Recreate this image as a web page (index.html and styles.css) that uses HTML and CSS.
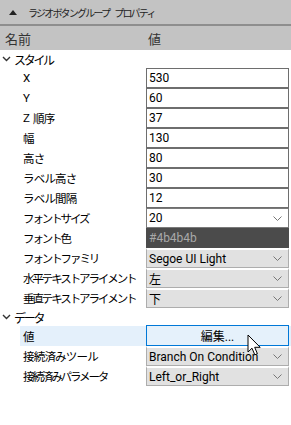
FILE: index.html
```html
<!DOCTYPE html>
<html lang="ja">
<head>
    <meta charset="UTF-8">
    <title>ラジオボタングループ プロパティ</title>
    <link rel="stylesheet" href="styles.css">
</head>
<body>
    <div class="panel">
        <div class="titlebar">
            <svg class="caret" width="8" height="5" viewBox="0 0 8 5"><path d="M0 5 L4 0 L8 5 Z" fill="#222"/></svg>
            <span>ラジオボタングループ</span><span class="gap">プロパティ</span>
        </div>
        <div class="colhead">
            <span class="col-name">名前</span>
            <span class="col-value">値</span>
        </div>

        <div class="props">
            <!-- スタイル -->
            <div class="cat">
                <svg class="chev" width="9" height="6" viewBox="0 0 9 6"><path d="M1 1 L4.5 4.5 L8 1" fill="none" stroke="#333" stroke-width="1.4"/></svg>
                <span>スタイル</span>
            </div>
            <div class="row"><div class="name">X</div><div class="val text">530</div></div>
            <div class="row"><div class="name">Y</div><div class="val text">60</div></div>
            <div class="row"><div class="name"><span class="gap-r">Z</span>順序</div><div class="val text">37</div></div>
            <div class="row"><div class="name">幅</div><div class="val text">130</div></div>
            <div class="row"><div class="name">高さ</div><div class="val text">80</div></div>
            <div class="row"><div class="name">ラベル高さ</div><div class="val text">30</div></div>
            <div class="row"><div class="name">ラベル間隔</div><div class="val text">12</div></div>
            <div class="row">
                <div class="name kana">フォントサイズ</div>
                <div class="val text combo"><span>20</span><svg class="drop" width="9" height="5" viewBox="0 0 9 5"><path d="M0.5 0.5 L4.5 4.5 L8.5 0.5" fill="none" stroke="#777" stroke-width="1"/></svg></div>
            </div>
            <div class="row"><div class="name kana">フォント色</div><div class="val color">#4b4b4b</div></div>
            <div class="row">
                <div class="name kana">フォントファミリ</div>
                <div class="val select"><span>Segoe UI Light</span><svg class="drop" width="9" height="5" viewBox="0 0 9 5"><path d="M0.5 0.5 L4.5 4.5 L8.5 0.5" fill="none" stroke="#777" stroke-width="1"/></svg></div>
            </div>
            <div class="row">
                <div class="name kana">水平テキストアライメント</div>
                <div class="val select"><span>左</span><svg class="drop" width="9" height="5" viewBox="0 0 9 5"><path d="M0.5 0.5 L4.5 4.5 L8.5 0.5" fill="none" stroke="#777" stroke-width="1"/></svg></div>
            </div>
            <div class="row">
                <div class="name kana">垂直テキストアライメント</div>
                <div class="val select"><span>下</span><svg class="drop" width="9" height="5" viewBox="0 0 9 5"><path d="M0.5 0.5 L4.5 4.5 L8.5 0.5" fill="none" stroke="#777" stroke-width="1"/></svg></div>
            </div>

            <!-- データ -->
            <div class="cat">
                <svg class="chev" width="9" height="6" viewBox="0 0 9 6"><path d="M1 1 L4.5 4.5 L8 1" fill="none" stroke="#333" stroke-width="1.4"/></svg>
                <span>データ</span>
            </div>
            <div class="row selected">
                <div class="name">値</div>
                <div class="val button">
                    編集...
                    <svg class="cursor" width="15" height="24" viewBox="0 0 15 24"><path d="M1 1 L1 18 L5 14.2 L7.8 20.8 L10.4 19.7 L7.7 13.3 L13.2 13.3 Z" fill="#fff" stroke="#000" stroke-width="1" stroke-linejoin="round"/></svg>
                </div>
            </div>
            <div class="row">
                <div class="name">接続済みツール</div>
                <div class="val select"><span>Branch On Condition</span><svg class="drop" width="9" height="5" viewBox="0 0 9 5"><path d="M0.5 0.5 L4.5 4.5 L8.5 0.5" fill="none" stroke="#777" stroke-width="1"/></svg></div>
            </div>
            <div class="row">
                <div class="name kana">接続済みパラメータ</div>
                <div class="val select"><span>Left_or_Right</span><svg class="drop" width="9" height="5" viewBox="0 0 9 5"><path d="M0.5 0.5 L4.5 4.5 L8.5 0.5" fill="none" stroke="#777" stroke-width="1"/></svg></div>
            </div>
        </div>
    </div>
</body>
</html>
```

FILE: styles.css
```css
body {
    margin: 0;
    padding: 0;
    background: #fff;
    font-family: Roboto, "Noto Sans CJK JP", sans-serif;
    font-size: 12px;
    color: #000;
}

.panel {
    width: 291px;
    height: 425px;
    background: #fff;
}

.titlebar {
    height: 24px;
    background: #c3c3c3;
    border-bottom: 2px solid #8e8e8e;
    display: flex;
    align-items: center;
    font-size: 10px;
    letter-spacing: -1.8px;
    color: #222;
}

.titlebar .caret {
    margin-left: 9px;
    margin-right: 11px;
}

.titlebar .gap {
    margin-left: 5px;
}

.colhead {
    height: 24px;
    background: #c3c3c3;
    display: flex;
    align-items: center;
    font-size: 13px;
    color: #333;
}

.col-name {
    width: 143px;
    padding-left: 5px;
}

.cat {
    height: 18px;
    display: flex;
    align-items: center;
    font-size: 12px;
    letter-spacing: -2.3px;
}

.cat .chev {
    margin-left: 2px;
    margin-right: 3px;
}

.row {
    height: 20px;
    display: grid;
    grid-template-columns: 146px 143px;
}

.row .name {
    padding-left: 23px;
    display: flex;
    align-items: center;
    white-space: nowrap;
    overflow: hidden;
    font-size: 11.5px;
    letter-spacing: -0.8px;
}

.row .name.kana {
    letter-spacing: -2.1px;
}

.gap-r {
    margin-right: 4px;
}

.row.selected {
    background: linear-gradient(to right, transparent 20px, #e4f0fb 20px);
}

.val {
    box-sizing: border-box;
    height: 20px;
    display: flex;
    align-items: center;
    justify-content: space-between;
    padding: 0 6px 0 2px;
    white-space: nowrap;
}

.val.text {
    background: #fff;
    border: 1px solid #6e6e6e;
}

.val.combo {
    border-color: #7a7a7a;
}

.val.color {
    background: #4b4b4b;
    color: #a9a9a9;
    border: 1px solid #4b4b4b;
}

.val.select {
    background: #e1e1e1;
    border: 1px solid #adadad;
    border-top-width: 2px;
    border-top-color: #fff;
}

.val.button {
    position: relative;
    justify-content: center;
    background: #e5f1fb;
    border: 1px solid #0078d7;
    height: 21px;
    margin-top: -1px;
    padding: 0;
}

.cursor {
    position: absolute;
    left: 100px;
    top: 8px;
}
```
